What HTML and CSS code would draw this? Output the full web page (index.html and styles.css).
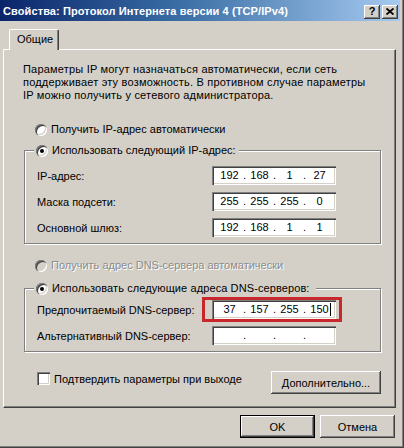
FILE: index.html
```html
<!DOCTYPE html>
<html lang="ru">
<head>
<meta charset="utf-8">
<title>Свойства: Протокол Интернета версии 4 (TCP/IPv4)</title>
<link rel="stylesheet" href="styles.css">
</head>
<body>
<div class="window">
  <div class="titlebar">
    <span class="title">Свойства: Протокол Интернета версии 4 (TCP/IPv4)</span>
    <div class="caption-buttons">
      <span class="cap-btn help">?</span>
      <span class="cap-btn close"><svg width="8" height="7" viewBox="0 0 8 7"><path d="M0.5 0.5L7.5 6.5M7.5 0.5L0.5 6.5" stroke="#000" stroke-width="1.8" fill="none"/></svg></span>
    </div>
  </div>
  <div class="client">
    <div class="tabs"><div class="tab">Общие</div></div>
    <div class="panel">
      <p class="intro">Параметры IP могут назначаться автоматически, если сеть<br>поддерживает эту возможность. В противном случае параметры<br>IP можно получить у сетевого администратора.</p>

      <div class="option option-auto-ip"><span class="radio"></span><span>Получить IP-адрес автоматически</span></div>

      <div class="group group-ip">
        <div class="legend option"><span class="radio checked"></span><span>Использовать следующий IP-адрес:</span></div>
        <div class="fields fields-ip">
          <div class="field"><span class="field-label">IP-адрес:</span>
            <div class="ipbox"><span class="oct">192</span><span class="dot">.</span><span class="oct">168</span><span class="dot">.</span><span class="oct">1</span><span class="dot">.</span><span class="oct">27</span></div>
          </div>
          <div class="field"><span class="field-label">Маска подсети:</span>
            <div class="ipbox"><span class="oct">255</span><span class="dot">.</span><span class="oct">255</span><span class="dot">.</span><span class="oct">255</span><span class="dot">.</span><span class="oct">0</span></div>
          </div>
          <div class="field"><span class="field-label">Основной шлюз:</span>
            <div class="ipbox"><span class="oct">192</span><span class="dot">.</span><span class="oct">168</span><span class="dot">.</span><span class="oct">1</span><span class="dot">.</span><span class="oct">1</span></div>
          </div>
        </div>
      </div>

      <div class="option option-auto-dns disabled"><span class="radio"></span><span>Получить адрес DNS-сервера автоматически</span></div>

      <div class="group group-dns">
        <div class="legend option legend-wide"><span class="radio checked"></span><span>Использовать следующие адреса DNS-серверов:</span></div>
        <div class="fields fields-dns">
          <div class="field"><span class="field-label">Предпочитаемый DNS-сервер:</span>
            <div class="ipbox highlight"><span class="oct">37</span><span class="dot">.</span><span class="oct">157</span><span class="dot">.</span><span class="oct">255</span><span class="dot">.</span><span class="oct">150<span class="caret"></span></span></div>
          </div>
          <div class="field"><span class="field-label">Альтернативный DNS-сервер:</span>
            <div class="ipbox"><span class="oct"></span><span class="dot">.</span><span class="oct"></span><span class="dot">.</span><span class="oct"></span><span class="dot">.</span><span class="oct"></span></div>
          </div>
        </div>
      </div>

      <div class="footer-row">
        <div class="check-option"><span class="checkbox"></span><span>Подтвердить параметры при выходе</span></div>
        <button class="btn btn-advanced" type="button">Дополнительно...</button>
      </div>
    </div>
    <div class="dialog-buttons">
      <button class="btn btn-default" type="button">OK</button>
      <button class="btn" type="button">Отмена</button>
    </div>
  </div>
</div>
</body>
</html>
```

FILE: styles.css
```css
* { box-sizing: border-box; }

html, body {
  margin: 0;
  padding: 0;
}

body {
  width: 404px;
  height: 448px;
  overflow: hidden;
  background: #d4d0c8;
  font-family: "Liberation Sans", Arial, sans-serif;
  font-size: 11px;
  color: #000;
}

.window {
  width: 404px;
  height: 448px;
  background: #d4d0c8;
  display: flex;
  flex-direction: column;
  box-shadow: inset -1px -1px 0 #404040, inset -2px -2px 0 #808080;
}

/* ---------- title bar ---------- */
.titlebar {
  height: 21px;
  margin-right: 4px;
  padding-left: 3px;
  padding-right: 2px;
  background: linear-gradient(to right, #0a246a 0%, #3a6ea5 45%, #a6caf0 100%);
  display: flex;
  align-items: center;
  justify-content: space-between;
}

.title {
  color: #fff;
  font-weight: bold;
  font-size: 11px;
  letter-spacing: 0.1px;
  white-space: nowrap;
}

.caption-buttons {
  display: flex;
  gap: 2px;
  padding-top: 2px;
}

.cap-btn {
  width: 16px;
  height: 14px;
  background: #d4d0c8;
  box-shadow: inset -1px -1px 0 #404040, inset 1px 1px 0 #fff, inset -2px -2px 0 #808080;
  display: flex;
  align-items: center;
  justify-content: center;
  font-weight: bold;
  font-size: 11px;
  line-height: 1;
}

.cap-btn.help {
  padding-bottom: 1px;
}

/* ---------- client ---------- */
.client {
  padding: 8px 8px 0 3px;
}

.tabs {
  height: 20px;
  padding-left: 6px;
  display: flex;
  position: relative;
  z-index: 1;
}

.tab {
  width: 50px;
  height: 21px;
  margin-bottom: -1px;
  background: #d4d0c8;
  border-top: 1px solid #fff;
  border-left: 1px solid #fff;
  border-right: 1px solid #404040;
  box-shadow: inset -1px 0 0 #808080;
  border-radius: 2px 2px 0 0;
  padding-left: 7px;
  line-height: 19px;
}

.panel {
  width: 393px;
  height: 359px;
  border-top: 1px solid #fff;
  border-left: 1px solid #fff;
  border-right: 1px solid #404040;
  border-bottom: 1px solid #404040;
  box-shadow: inset -1px -1px 0 #808080;
  display: flex;
  flex-direction: column;
}

.intro {
  margin: 13px 0 0 19px;
  line-height: 13px;
  letter-spacing: 0.2px;
  white-space: nowrap;
}

/* ---------- radio options ---------- */
.option {
  display: flex;
  align-items: center;
  gap: 4px;
  height: 13px;
  line-height: 13px;
  white-space: nowrap;
}

.radio {
  flex: none;
  width: 12px;
  height: 12px;
  border-radius: 50%;
  background: #fff;
  box-shadow: inset 1px 1px 0 #808080, inset 2px 2px 0 #404040,
              inset -1px -1px 0 #fff, inset -2px -2px 0 #d4d0c8;
  position: relative;
}

.radio.checked::after {
  content: "";
  position: absolute;
  left: 4px;
  top: 4px;
  width: 4px;
  height: 4px;
  border-radius: 50%;
  background: #000;
}

.option-auto-ip {
  margin: 21px 0 0 31px;
}

.option-auto-dns {
  margin: 15px 0 0 31px;
}

.disabled {
  color: #8c8c8c;
  text-shadow: 1px 1px 0 #fff;
}

.disabled .radio {
  background: #d4d0c8;
}

/* ---------- group boxes ---------- */
.group {
  width: 357px;
  margin-left: 20px;
  padding: 0 0 6px 12px;
  border: 1px solid #808080;
  box-shadow: 1px 1px 0 #fff, inset 1px 1px 0 #fff;
}

.group-ip {
  margin-top: 14px;
}

.group-dns {
  margin-top: 16px;
}

.legend {
  width: fit-content;
  margin: -7px 0 0 -3px;
  padding: 0 3px 0 2px;
  background: #d4d0c8;
}

.legend-wide {
  letter-spacing: 0.1px;
  padding-right: 6px;
}

.fields-ip {
  margin-top: 9px;
}

.fields-dns {
  margin-top: 5px;
}

.field {
  display: flex;
  align-items: center;
  height: 19px;
}

.field + .field {
  margin-top: 7px;
}

.field-label {
  width: 175px;
  white-space: nowrap;
}

/* ---------- IP address box ---------- */
.ipbox {
  width: 124px;
  height: 19px;
  background: #fff;
  box-shadow: inset 1px 1px 0 #808080, inset 2px 2px 0 #404040,
              inset -1px -1px 0 #fff, inset -2px -2px 0 #d4d0c8;
  display: flex;
  align-items: center;
  padding-left: 5px;
  line-height: 13px;
}

.oct {
  width: 25px;
  text-align: center;
  white-space: nowrap;
}

.dot {
  width: 5px;
  text-align: center;
}

.caret {
  display: inline-block;
  width: 1px;
  height: 13px;
  margin-left: 1px;
  margin-right: -2px;
  vertical-align: top;
  background: #000;
}

.highlight {
  position: relative;
}

.highlight::before {
  content: "";
  position: absolute;
  left: -10px;
  right: -6px;
  top: -3px;
  bottom: -3px;
  border: 3px solid #c8282c;
}

/* ---------- footer row inside panel ---------- */
.footer-row {
  display: flex;
  align-items: flex-start;
  margin: 19px 0 0 33px;
}

.check-option {
  display: flex;
  align-items: center;
  gap: 4px;
  height: 13px;
  margin-top: 1px;
  white-space: nowrap;
}

.checkbox {
  flex: none;
  width: 13px;
  height: 13px;
  background: #fff;
  box-shadow: inset 1px 1px 0 #808080, inset 2px 2px 0 #404040,
              inset -1px -1px 0 #fff, inset -2px -2px 0 #d4d0c8;
}

/* ---------- buttons ---------- */
.btn {
  width: 75px;
  height: 23px;
  padding: 0;
  border: none;
  background: #d4d0c8;
  font: inherit;
  color: #000;
  box-shadow: inset -1px -1px 0 #404040, inset 1px 1px 0 #fff,
              inset -2px -2px 0 #808080, inset 2px 2px 0 #d4d0c8;
}

.btn-advanced {
  width: 110px;
  margin-left: auto;
  margin-right: 14px;
}

.btn-default {
  box-shadow: inset 0 0 0 1px #000, inset -2px -2px 0 #404040,
              inset 2px 2px 0 #fff, inset -3px -3px 0 #808080;
}

.dialog-buttons {
  display: flex;
  justify-content: flex-end;
  gap: 5px;
  margin-top: 7px;
  margin-right: 1px;
}
```
